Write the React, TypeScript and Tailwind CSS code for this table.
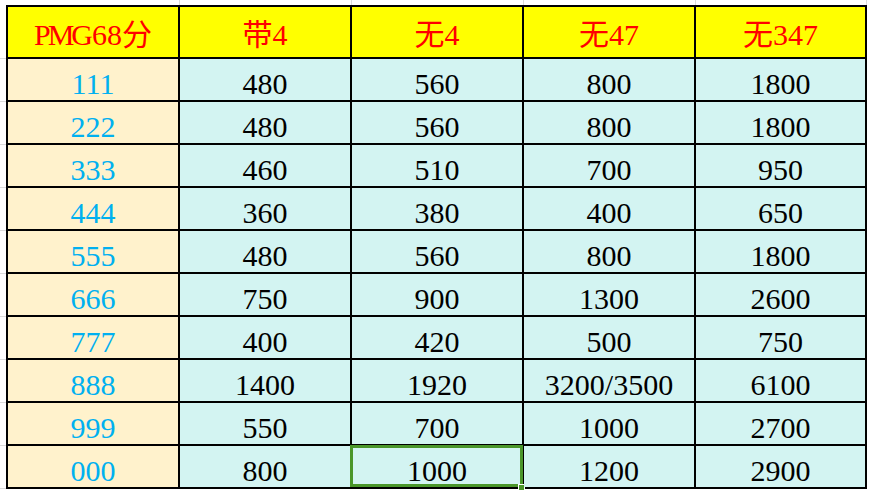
const header = ["PMG68分", "带4", "无4", "无47", "无347"];

const rows = [
  ["111", "480", "560", "800", "1800"],
  ["222", "480", "560", "800", "1800"],
  ["333", "460", "510", "700", "950"],
  ["444", "360", "380", "400", "650"],
  ["555", "480", "560", "800", "1800"],
  ["666", "750", "900", "1300", "2600"],
  ["777", "400", "420", "500", "750"],
  ["888", "1400", "1920", "3200/3500", "6100"],
  ["999", "550", "700", "1000", "2700"],
  ["000", "800", "1000", "1200", "2900"],
];

const colW = ["w-[172px]", "w-[172px]", "w-[172px]", "w-[172px]", "w-[171px]"];

export default function App() {
  return (
    <div className="h-[494px] w-[871px] overflow-hidden bg-white font-['Liberation_Serif','Noto_Sans_CJK_SC',serif]">
      {/* sheet gridlines above the table */}
      <div className="flex h-[5px]">
        <div className="w-[8px] shrink-0" />
        {colW.map((w, i) => (
          <div key={i} className={`${w} shrink-0 border-r border-[#dadada]`} />
        ))}
      </div>

      <div className="flex">
        {/* sheet gridlines left of the table */}
        <div className="flex w-[6px] shrink-0 flex-col">
          <div className="h-[54px] border-b border-[#dadada]" />
          {rows.map((_, i) => (
            <div key={i} className="h-[43px] border-b border-[#dadada]" />
          ))}
        </div>

        <div className="border-l-2 border-t-2 border-black">
          {/* header */}
          <div className="flex h-[52px] border-b-2 border-black bg-[#ffff00]">
            {header.map((h, i) => (
              <div
                key={h}
                className={`${colW[i]} flex shrink-0 items-center justify-center border-r-2 border-black pt-[6px] text-[30px] leading-[34px] text-[#ff0000]`}
              >
                {i === 0 ? (
                  <span>
                    <span className="tracking-[-3px]">PMG</span>
                    <span className="ml-[2px]">68分</span>
                  </span>
                ) : (
                  h
                )}
              </div>
            ))}
          </div>

          {/* body */}
          {rows.map((r, ri) => (
            <div key={ri} className="flex h-[43px] border-b-2 border-black">
              {r.map((v, ci) => (
                <div
                  key={ci}
                  className={`${colW[ci]} relative flex shrink-0 items-center justify-center border-r-2 border-black pt-[9px] text-[30px] leading-[34px] ${
                    ci === 0
                      ? "bg-[#fff2cc] text-[#00b0f0]"
                      : "bg-[#d3f4f2] text-black"
                  }`}
                >
                  {v}
                  {ri === 9 && ci === 2 && (
                    <>
                      <div className="pointer-events-none absolute -left-[2px] -right-[1px] -top-[1px] bottom-0 border-[3px] border-[#4a962a]" />
                      <div className="absolute -bottom-[4px] -right-[3px] h-[7px] w-[7px] border border-white bg-[#4a962a]" />
                    </>
                  )}
                </div>
              ))}
            </div>
          ))}
        </div>
      </div>
    </div>
  );
}
